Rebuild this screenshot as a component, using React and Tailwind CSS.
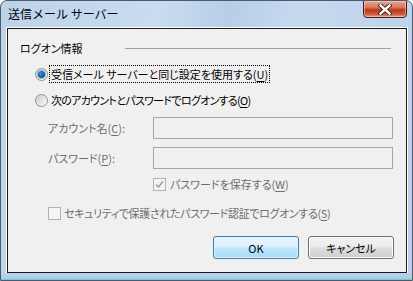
import React from "react";

function Radio({ checked }) {
  return (
    <div className="w-[13px] h-[13px] rounded-full border border-[#8e8f8f] bg-[linear-gradient(135deg,#d4d4d4,#ffffff)] flex items-center justify-center shrink-0">
      {checked ? (
        <div className="w-[7px] h-[7px] rounded-full bg-[radial-gradient(circle_at_40%_40%,#3e8fd8_0%,#1c5a9c_60%,#123e6e_100%)] shadow-[0_0_0_1px_#7fb4e6]" />
      ) : (
        <div className="w-[9px] h-[9px] rounded-full bg-[linear-gradient(135deg,#cfcfcf,#f6f6f6)]" />
      )}
    </div>
  );
}

function Check({ checked, disabled }) {
  return (
    <div
      className={
        "w-[13px] h-[13px] shrink-0 border flex items-center justify-center " +
        (disabled
          ? "border-[#b1b1b1] bg-[#f4f4f4]"
          : "border-[#8f8f8f] bg-[linear-gradient(135deg,#dcdcdc,#ffffff)]")
      }
    >
      {checked && (
        <svg width="9" height="9" viewBox="0 0 9 9">
          <path d="M1 4.5 L3.5 7 L8 1.5" fill="none" stroke="#a0a0a0" strokeWidth="1.6" />
        </svg>
      )}
    </div>
  );
}

function U({ children }) {
  return <span className="underline underline-offset-2">{children}</span>;
}

export default function App() {
  return (
    <div className="w-[413px] h-[281px] overflow-hidden rounded-t-[7px] border border-[#4d5a69] bg-[linear-gradient(100deg,#bdd3ea_0%,#c9dcf0_35%,#b6cee8_50%,#c6daef_65%,#b9d0ea_100%)] flex flex-col font-['Noto_Sans_CJK_JP',sans-serif] text-[12px] text-black">
      <div className="h-[27px] flex items-start justify-between pl-[7px] pr-[5px] shrink-0">
        <span className="mt-[5px] leading-[16px] text-[12px]">送信メール サーバー</span>
        <div className="-mt-px w-[44px] h-[18px] rounded-b-[4px] border border-[#3e2020] bg-[linear-gradient(180deg,#e9a592_0%,#d9765d_40%,#b8381c_55%,#c9553a_80%,#e39a7f_100%)] flex items-center justify-center shadow-[inset_0_0_0_1px_rgba(255,220,210,0.5)]">
          <svg width="14" height="11" viewBox="0 0 14 11">
            <path d="M2.5 1.5 L11.5 9.5 M11.5 1.5 L2.5 9.5" stroke="#3a1a14" strokeWidth="4.2" strokeLinecap="square" />
            <path d="M2.5 1.5 L11.5 9.5 M11.5 1.5 L2.5 9.5" stroke="#ffffff" strokeWidth="2.4" strokeLinecap="square" />
          </svg>
        </div>
      </div>
      <div className="ml-[6px] w-[400px] h-[245px] shrink-0 border border-[#1a1a1a] shadow-[0_0_0_1px_#ffffff] bg-[#f0f0f0] flex flex-col text-[11px] [font-feature-settings:'palt']">
        <div className="mt-[11px] h-[16px] flex items-center pl-[12px] pr-[15px]">
          <span className="w-[105px] leading-[16px]">ログオン情報</span>
          <div className="flex-1 h-px bg-[#a0a0a0]" />
        </div>
        <div className="mt-[9px] h-[18px] flex items-center pl-[27px]">
          <Radio checked />
          <span className="ml-[1px] border border-dotted border-black px-[1px] leading-[16px]">
            受信メール サーバーと同じ設定を使用する(<U>U</U>)
          </span>
        </div>
        <div className="mt-[8px] h-[18px] flex items-center pl-[27px]">
          <Radio />
          <span className="ml-[2px] px-[1px] leading-[16px] tracking-[-0.7px]">
            次のアカウントとパスワードでログオンする(<U>O</U>)
          </span>
        </div>
        <div className="mt-[8px] h-[22px] flex items-center pl-[40px]">
          <span className="w-[105px] text-[#6d6d6d] leading-[16px]">
            アカウント名(<U>C</U>):
          </span>
          <div className="w-[240px] h-[22px] border border-[#a6a6a6] bg-[#f0f0f0]" />
        </div>
        <div className="mt-[8px] h-[22px] flex items-center pl-[40px]">
          <span className="w-[105px] text-[#6d6d6d] leading-[16px]">
            パスワード(<U>P</U>):
          </span>
          <div className="w-[240px] h-[22px] border border-[#a6a6a6] bg-[#f0f0f0]" />
        </div>
        <div className="mt-[8px] h-[14px] flex items-center pl-[145px]">
          <Check checked disabled />
          <span className="ml-[4px] text-[#6d6d6d] leading-[16px]">
            パスワードを保存する(<U>W</U>)
          </span>
        </div>
        <div className="mt-[15px] h-[14px] flex items-center pl-[40px]">
          <Check disabled />
          <span className="ml-[3px] text-[#6d6d6d] leading-[16px] tracking-[-0.35px]">
            セキュリティで保護されたパスワード認証でログオンする(<U>S</U>)
          </span>
        </div>
        <div className="mt-[16px] flex justify-end gap-[9px] pr-[12px]">
          <div className="w-[86px] h-[23px] rounded-[3px] border border-[#3c7fb1] bg-[linear-gradient(180deg,#eaf6fd_0%,#d9f0fc_48%,#bee6fd_52%,#a7d9f5_100%)] shadow-[inset_0_0_0_1px_#dff1fb] flex items-center justify-center leading-[16px]">
            OK
          </div>
          <div className="w-[86px] h-[23px] rounded-[3px] border border-[#707070] bg-[linear-gradient(180deg,#f2f2f2_0%,#ebebeb_48%,#dddddd_52%,#cfcfcf_100%)] shadow-[inset_0_0_0_1px_#fcfcfc] flex items-center justify-center leading-[16px]">
            キャンセル
          </div>
        </div>
      </div>
      <div className="flex-1 bg-[linear-gradient(180deg,#bcd3ea_0%,#b3cde8_60%,#8fd3e6_85%,#6fb4cf_100%)]" />
    </div>
  );
}
